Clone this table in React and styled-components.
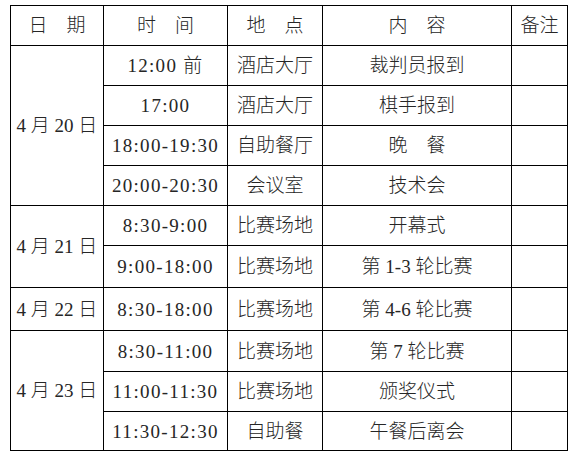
import React from "react";
import styled, { createGlobalStyle } from "styled-components";

const Global = createGlobalStyle`
  html, body { margin: 0; padding: 0; background: #fff; }
  body { font-family: "Liberation Serif", "Noto Sans CJK SC", serif; }
`;

const Page = styled.div`
  padding: 5px 0 0 10px;
`;

const Table = styled.table`
  border-collapse: collapse;
  table-layout: fixed;
  width: 557px;
  border: 1.5px solid #000;
  color: #262626;
  font-size: 19px;
`;

const Row = styled.tr`
  height: ${(p) => p.$h}px;
`;

const Cell = styled.td`
  border: 1px solid #000;
  padding: 0;
  text-align: center;
  vertical-align: middle;
  white-space: nowrap;
  font-weight: 300;
  letter-spacing: ${(p) => (p.$time ? "1.3px" : "0")};
  line-height: 1;
`;

const HeadCell = styled(Cell).attrs({ as: "th" })``;

const cols = [93, 124, 95, 189, 56];

const groups = [
  {
    date: "4 月 20 日",
    rows: [
      ["12:00 前", "酒店大厅", "裁判员报到", 40],
      ["17:00", "酒店大厅", "棋手报到", 40],
      ["18:00-19:30", "自助餐厅", "晚　餐", 40],
      ["20:00-20:30", "会议室", "技术会", 40],
    ],
  },
  {
    date: "4 月 21 日",
    rows: [
      ["8:30-9:00", "比赛场地", "开幕式", 40],
      ["9:00-18:00", "比赛场地", "第 1-3 轮比赛", 42],
    ],
  },
  {
    date: "4 月 22 日",
    rows: [["8:30-18:00", "比赛场地", "第 4-6 轮比赛", 43]],
  },
  {
    date: "4 月 23 日",
    rows: [
      ["8:30-11:00", "比赛场地", "第 7 轮比赛", 41],
      ["11:00-11:30", "比赛场地", "颁奖仪式", 40],
      ["11:30-12:30", "自助餐", "午餐后离会", 39],
    ],
  },
];

export default function App() {
  return (
    <Page>
      <Global />
      <Table>
        <colgroup>
          {cols.map((w, i) => (
            <col key={i} style={{ width: w }} />
          ))}
        </colgroup>
        <thead>
          <Row $h={40}>
            <HeadCell>日　期</HeadCell>
            <HeadCell>时　间</HeadCell>
            <HeadCell>地　点</HeadCell>
            <HeadCell>内　容</HeadCell>
            <HeadCell>备注</HeadCell>
          </Row>
        </thead>
        <tbody>
          {groups.map((g) =>
            g.rows.map((r, i) => (
              <Row key={g.date + i} $h={r[3]}>
                {i === 0 && <Cell rowSpan={g.rows.length}>{g.date}</Cell>}
                <Cell $time>{r[0]}</Cell>
                <Cell>{r[1]}</Cell>
                <Cell>{r[2]}</Cell>
                <Cell />
              </Row>
            ))
          )}
        </tbody>
      </Table>
    </Page>
  );
}
